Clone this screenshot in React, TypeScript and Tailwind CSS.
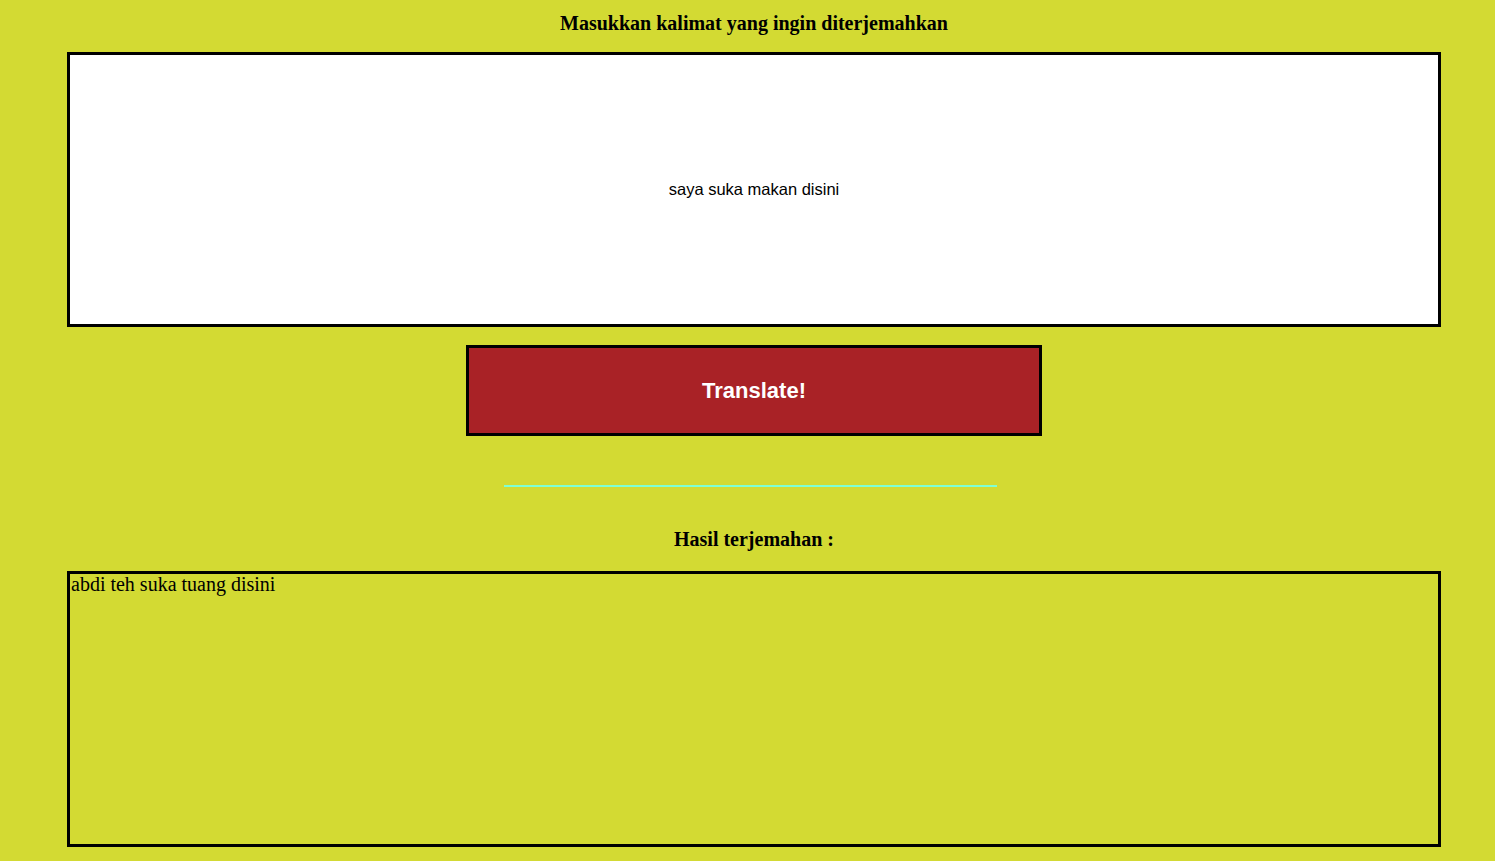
import React from "react";

const serif = { fontFamily: '"Liberation Serif", "Times New Roman", serif' };

export default function App() {
  return (
    <div className="min-h-screen bg-[#d3da33] pl-[67px] pr-[54px] text-black" style={serif}>
      {/* judul input */}
      <h2 className="h-[52px] pt-[12px] text-center text-[20px] font-bold leading-[22px]">
        Masukkan kalimat yang ingin diterjemahkan
      </h2>

      <div className="flex h-[275px] items-center justify-center border-[3px] border-black bg-white font-['Liberation_Sans',Arial,sans-serif] text-[16.5px]">
        saya suka makan disini
      </div>

      <div className="mt-[18px] flex justify-center">
        <button className="h-[91px] w-[576px] border-[3px] border-black bg-[#a92226] font-['Liberation_Sans',Arial,sans-serif] text-[22px] font-bold text-white">
          Translate!
        </button>
      </div>

      <div className="ml-[437px] mt-[49px] h-[2px] w-[493px] bg-[#7fffd4]"></div>

      {/* hasil */}
      <h2 className="h-[84px] pt-[41px] text-center text-[20px] font-bold leading-[22px]">
        Hasil terjemahan :
      </h2>

      <div className="h-[276px] border-[3px] border-black px-[1px] pt-0 text-[20px] leading-[21px]">
        abdi teh suka tuang disini
      </div>
    </div>
  );
}
